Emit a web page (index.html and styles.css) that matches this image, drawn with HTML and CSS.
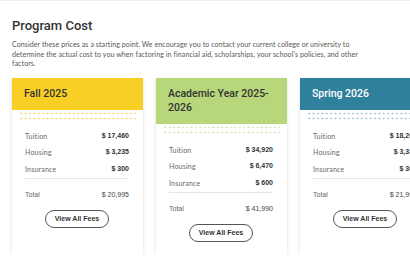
FILE: index.html
```html
<!DOCTYPE html>
<html lang="en">
<head>
    <meta charset="UTF-8">
    <meta name="viewport" content="width=device-width, initial-scale=1.0">
    <title>Program Cost</title>
    <link rel="stylesheet" href="styles.css">
</head>
<body>
    <main class="page">
        <h1 class="title">Program Cost</h1>
        <p class="intro">Consider these prices as a starting point. We encourage you to contact your current college or university to determine the actual cost to you when factoring in financial aid, scholarships, your school's policies, and other factors.</p>
        <div class="cards">
            <div class="card card-fall">
                <div class="card-head">Fall 2025</div>
                <div class="dots"></div>
                <div class="card-body">
                    <div class="row"><span>Tuition</span><b>$ 17,460</b></div>
                    <div class="row"><span>Housing</span><b>$ 3,235</b></div>
                    <div class="row"><span>Insurance</span><b>$ 300</b></div>
                    <div class="row total"><span>Total</span><b>$ 20,995</b></div>
                    <button class="fees-btn">View All Fees</button>
                </div>
            </div>
            <div class="card card-year">
                <div class="card-head">Academic Year 2025-2026</div>
                <div class="dots"></div>
                <div class="card-body">
                    <div class="row"><span>Tuition</span><b>$ 34,920</b></div>
                    <div class="row"><span>Housing</span><b>$ 6,470</b></div>
                    <div class="row"><span>Insurance</span><b>$ 600</b></div>
                    <div class="row total"><span>Total</span><b>$ 41,990</b></div>
                    <button class="fees-btn">View All Fees</button>
                </div>
            </div>
            <div class="card card-spring">
                <div class="card-head">Spring 2026</div>
                <div class="dots"></div>
                <div class="card-body">
                    <div class="row"><span>Tuition</span><b>$ 18,260</b></div>
                    <div class="row"><span>Housing</span><b>$ 3,335</b></div>
                    <div class="row"><span>Insurance</span><b>$ 300</b></div>
                    <div class="row total"><span>Total</span><b>$ 21,995</b></div>
                    <button class="fees-btn">View All Fees</button>
                </div>
            </div>
        </div>
    </main>
</body>
</html>
```

FILE: styles.css
```css
body { margin: 0; background: #fff; font-family: Lato, 'Noto Sans', sans-serif; color: #333; }
.page { border-top: 1px solid #eeeeee; padding: 17px 0 0 12px; overflow: hidden; }
.title { font-family: Roboto, sans-serif; font-weight: 500; font-size: 13px; line-height: 16px; margin: 0 0 6px; color: #333; }
.intro { font-size: 7px; line-height: 9.6px; letter-spacing: 0.1px; color: #555; margin: 0 0 9px; max-width: 352px; }
.cards { display: flex; gap: 13px; width: 560px; }
.card { flex: 0 0 131px; background: #fff; box-shadow: 0 1px 4px rgba(0,0,0,0.13); display: flex; flex-direction: column; }
.card-head { font-family: Roboto, sans-serif; font-weight: 500; font-size: 10.5px; line-height: 14px; padding: 9px 12px; color: #333; }
.card-fall .card-head { background: #f8cf24; }
.card-year .card-head { background: #b8d67a; }
.card-spring .card-head { background: #2f809b; color: #fff; }
.dots { height: 10px; margin: 1px 7px 0; background-size: 4.4px 5px; }
.card-fall .dots { background-image: radial-gradient(circle, #f5d76e 0.8px, transparent 1.1px); }
.card-year .dots { background-image: radial-gradient(circle, #d7e4b4 0.8px, transparent 1.1px); }
.card-spring .dots { background-image: radial-gradient(circle, #a3c5d2 0.8px, transparent 1.1px); }
.card-body { padding: 7px 14px 12px 13px; display: flex; flex-direction: column; }
.row { display: flex; justify-content: space-between; font-size: 7px; line-height: 16.5px; }
.row span { color: #666; letter-spacing: 0.2px; }
.row b { font-family: 'Liberation Sans', Arial, sans-serif; color: #333; }
.total { border-top: 1px solid #e6e6e6; margin-top: 1px; padding-top: 8px; }
.total span { font-family: 'Liberation Sans', Arial, sans-serif; letter-spacing: 0; }
.total b { font-weight: normal; color: #444; }
.fees-btn { align-self: center; margin-top: 6px; height: 18px; width: 64px; border: 1px solid #555; border-radius: 10px; background: #fff; font-family: 'Liberation Sans', Arial, sans-serif; font-weight: bold; font-size: 7px; color: #333; padding: 0; }
```
